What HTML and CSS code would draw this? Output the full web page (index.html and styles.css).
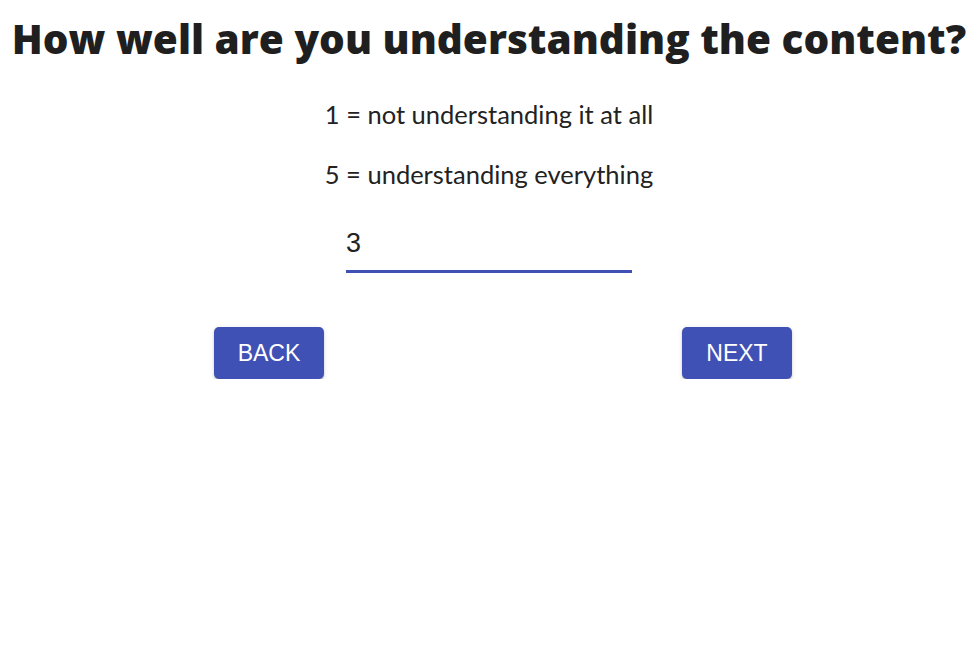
FILE: index.html
```html
<!DOCTYPE html>
<html>
<head>
<meta charset="utf-8">
<link rel="stylesheet" href="styles.css">
</head>
<body>
<div class="page">
  <h1 class="title">How well are you understanding the content?</h1>
  <p class="scale">1 = not understanding it at all</p>
  <p class="scale">5 = understanding everything</p>
  <div class="field"><span class="value">3</span></div>
  <div class="actions">
    <button class="btn">BACK</button>
    <button class="btn">NEXT</button>
  </div>
</div>
</body>
</html>
```
FILE: styles.css
```css
html, body { margin: 0; padding: 0; background: #fff; }
.page {
  width: 978px;
  display: flex;
  flex-direction: column;
  align-items: center;
  color: #222;
}
.title {
  font-family: "Open Sans", Lato, sans-serif;
  font-weight: 800;
  font-size: 40.5px;
  line-height: 50px;
  margin: 14px 0 0 0;
  white-space: nowrap;
  color: #1f1f1f;
}
.scale {
  font-family: Lato, "Open Sans", sans-serif;
  font-size: 25.5px;
  line-height: 30px;
  margin: 35px 0 0 0;
}
.scale + .scale { margin-top: 30px; }
.field {
  width: 286px;
  margin-top: 26px;
  border-bottom: 3px solid #3f51b5;
  height: 54px;
  box-sizing: content-box;
  display: flex;
  align-items: center;
  padding-top: 1px;
}
.value {
  font-family: "Liberation Sans", Arial, sans-serif;
  font-size: 27px;
  color: #222;
}
.actions {
  align-self: stretch;
  display: flex;
  justify-content: space-between;
  padding: 0 186px 0 214px;
  margin-top: 54px;
}
.btn {
  width: 110px;
  height: 52px;
  border: none;
  border-radius: 5px;
  background: #3f51b5;
  color: #fff;
  font-family: "Liberation Sans", Arial, sans-serif;
  font-size: 23px;
  font-weight: 400;
  box-shadow: 0 3px 1px -2px rgba(0,0,0,.2), 0 2px 2px 0 rgba(0,0,0,.14), 0 1px 5px 0 rgba(0,0,0,.12);
}
```
